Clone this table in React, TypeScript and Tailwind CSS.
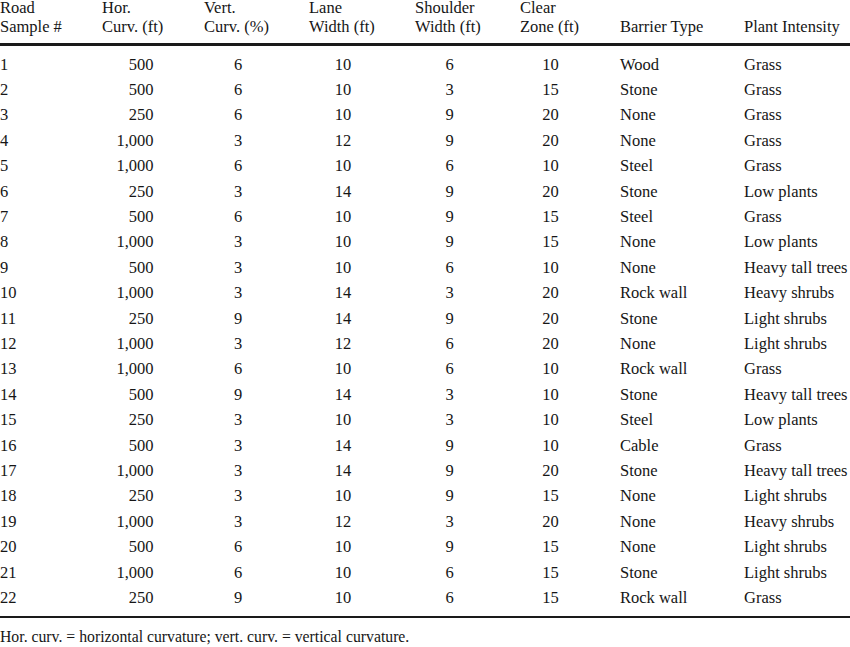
import React from "react";

const rows: [string, string, string, string, string, string, string, string][] = [
  ["1", "500", "6", "10", "6", "10", "Wood", "Grass"],
  ["2", "500", "6", "10", "3", "15", "Stone", "Grass"],
  ["3", "250", "6", "10", "9", "20", "None", "Grass"],
  ["4", "1,000", "3", "12", "9", "20", "None", "Grass"],
  ["5", "1,000", "6", "10", "6", "10", "Steel", "Grass"],
  ["6", "250", "3", "14", "9", "20", "Stone", "Low plants"],
  ["7", "500", "6", "10", "9", "15", "Steel", "Grass"],
  ["8", "1,000", "3", "10", "9", "15", "None", "Low plants"],
  ["9", "500", "3", "10", "6", "10", "None", "Heavy tall trees"],
  ["10", "1,000", "3", "14", "3", "20", "Rock wall", "Heavy shrubs"],
  ["11", "250", "9", "14", "9", "20", "Stone", "Light shrubs"],
  ["12", "1,000", "3", "12", "6", "20", "None", "Light shrubs"],
  ["13", "1,000", "6", "10", "6", "10", "Rock wall", "Grass"],
  ["14", "500", "9", "14", "3", "10", "Stone", "Heavy tall trees"],
  ["15", "250", "3", "10", "3", "10", "Steel", "Low plants"],
  ["16", "500", "3", "14", "9", "10", "Cable", "Grass"],
  ["17", "1,000", "3", "14", "9", "20", "Stone", "Heavy tall trees"],
  ["18", "250", "3", "10", "9", "15", "None", "Light shrubs"],
  ["19", "1,000", "3", "12", "3", "20", "None", "Heavy shrubs"],
  ["20", "500", "6", "10", "9", "15", "None", "Light shrubs"],
  ["21", "1,000", "6", "10", "6", "15", "Stone", "Light shrubs"],
  ["22", "250", "9", "10", "6", "15", "Rock wall", "Grass"],
];

const grid = "grid grid-cols-[102px_102px_105px_106px_105px_100px_124px_106px]";

export default function App() {
  return (
    <div
      className="w-[850px] h-[647px] overflow-hidden bg-white text-[#161616] text-[16.5px]"
      style={{ fontFamily: '"Liberation Serif", "Times New Roman", serif' }}
    >
      <div className={`${grid} mt-[-1.8px] leading-[19px] whitespace-nowrap`}>
        <div>Road<br />Sample #</div>
        <div>Hor.<br />Curv. (ft)</div>
        <div>Vert.<br />Curv. (%)</div>
        <div>Lane<br />Width (ft)</div>
        <div>Shoulder<br />Width (ft)</div>
        <div>Clear<br />Zone (ft)</div>
        <div><br />Barrier Type</div>
        <div><br />Plant Intensity</div>
      </div>
      <div className="mt-[6.8px] h-[2.5px] bg-[#1a1a1a]" />
      <div className="pt-[6.2px]">
        {rows.map((r) => (
          <div key={r[0]} className={`${grid} h-[25.4px] leading-[25.4px] whitespace-nowrap`}>
            <div>{r[0]}</div>
            <div className="w-[51.5px] text-right">{r[1]}</div>
            <div className="w-[68px] text-center">{r[2]}</div>
            <div className="w-[68px] text-center">{r[3]}</div>
            <div className="w-[69px] text-center">{r[4]}</div>
            <div className="w-[61px] text-center">{r[5]}</div>
            <div>{r[6]}</div>
            <div>{r[7]}</div>
          </div>
        ))}
      </div>
      <div className="mt-[5.5px] h-[2.5px] bg-[#1a1a1a]" />
      <div className="mt-[8.9px] text-[15.75px] leading-[20px] whitespace-nowrap">
        Hor. curv. = horizontal curvature; vert. curv. = vertical curvature.
      </div>
    </div>
  );
}
